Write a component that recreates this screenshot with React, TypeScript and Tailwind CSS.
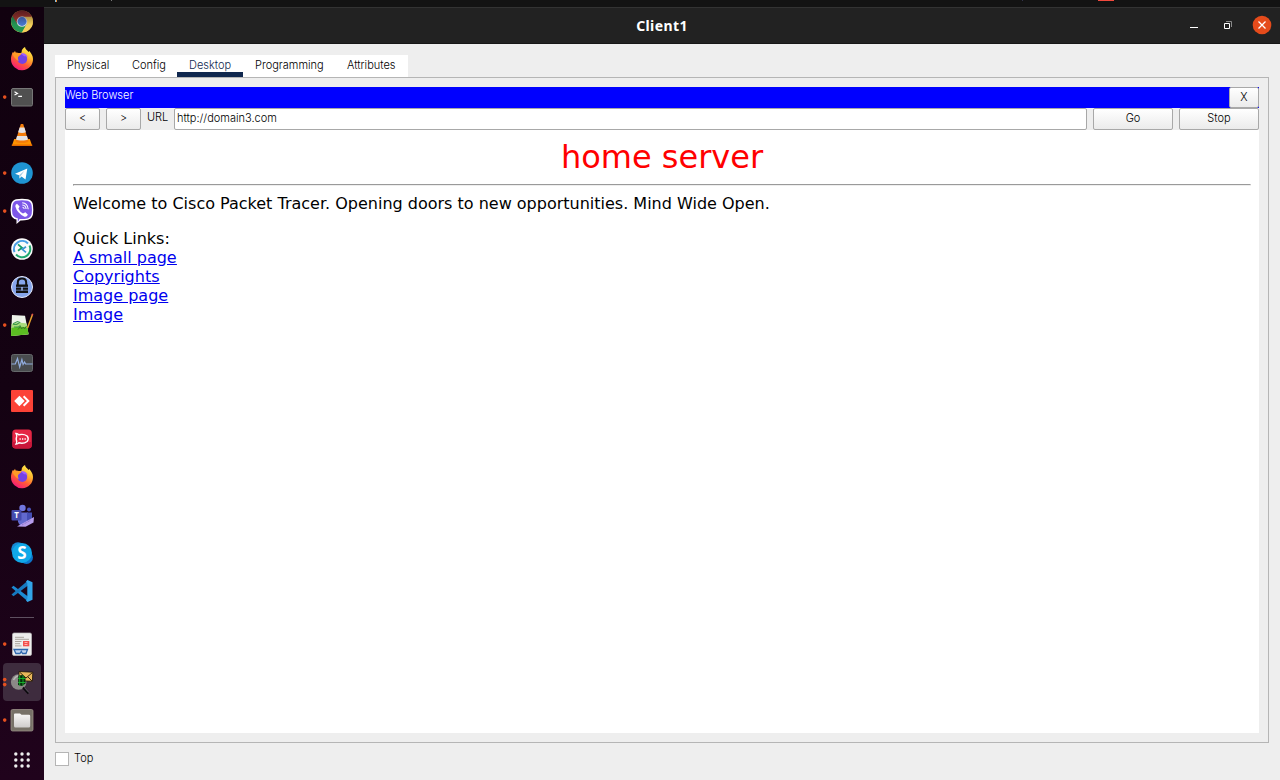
import type { ReactNode } from 'react';

function Firefox() {
  return (
    <g>
      <defs>
        <linearGradient id="fx" x1="0.85" y1="0.05" x2="0.3" y2="1">
          <stop offset="0" stopColor="#fff44f" />
          <stop offset="0.35" stopColor="#ffb52e" />
          <stop offset="0.65" stopColor="#ff5b36" />
          <stop offset="1" stopColor="#f5167e" />
        </linearGradient>
      </defs>
      <path d="M12.800 12l1 .8 1.200-2 .8 2.100c2-.7 3.600.3 5.200-.1.200-2.500 1.800-4.600 4-5.800.100 2.400 2.500 3 3.500 5l.800-1c2.300 2.700 3.700 5 3.700 8a11 11 0 01-22 .6c-.2-3 1-5.600 1.800-7.600z" fill="url(#fx)" />
      <path d="M19 12.800q1-3.200 2.200-4.300l.5 4z" fill="#14010f" />
      <circle cx="22.300" cy="19" r="4.900" fill="#7542e5" />
      <path d="M21 13.500c3-1 6.500 1.500 6.600 4-.8-1.300-2.200-1.500-3.400-1.300-1.200-.7-2.400-1.500-3.200-2.700z" fill="#a05bff" />
      <path d="M12.500 13.500c2-1.500 4.500-.8 6 0l2.800.3c-.3 1.600-2.800 1.900-3.300 3.400-.2 1.300.1 2.600.8 3.700-3.100-1.100-5.600-4.600-6.300-7.400z" fill="#ff9a26" />
    </g>
  );
}

const icons: { dot?: boolean; name: string; art: ReactNode }[] = [
  {
    name: 'Chrome',
    art: (
      <g>
        <defs>
          <linearGradient id="fade" x1="0" y1="0" x2="0" y2="1">
            <stop offset="0" stopColor="#12010f" stopOpacity=".65" />
            <stop offset="1" stopColor="#12010f" stopOpacity="0" />
          </linearGradient>
        </defs>
        <circle cx="22" cy="19.500" r="11" fill="#f6cf55" />
        <path d="M12.500 14A11 11 0 0022 30.500l5-8.700-5-2.300z" fill="#249654" />
        <path d="M22 14.500h9.600a11 11 0 01-9.600 16l5-9z" fill="#f3cf5b" />
        <path d="M12.500 14A11 11 0 0131.500 14l.2.700H22l-5 6.700z" fill="#a83a2f" />
        <circle cx="22" cy="19.500" r="5.300" fill="#d2d8df" />
        <circle cx="22" cy="19.500" r="4.400" fill="#4778cf" />
        <rect x="10" y="5" width="24" height="18" fill="url(#fade)" />
      </g>
    ),
  },
  { name: 'Firefox', art: <Firefox /> },
  {
    name: 'Terminal',
    dot: true,
    art: (
      <g>
        <rect x="11.500" y="10.500" width="21" height="17.500" rx="1.500" fill="#505050" stroke="#777" />
        <path d="M14.500 13.700l3 1.700-3 1.700M18.200 18.400h3.800" fill="none" stroke="#fff" strokeWidth="1.200" />
      </g>
    ),
  },
  {
    name: 'VLC',
    art: (
      <g>
        <path d="M14.200 23h15.600l2.400 7H11.800z" fill="#ff9300" />
        <path d="M11.800 28.500h20.400V30H11.800z" fill="#e56b00" />
        <path d="M20.800 8h2.400l5.300 17.500c-2 2-11 2-13 0z" fill="#f47d0a" />
        <path d="M19.600 11.500h4.800l1.500 4.800c-2 1-5.800 1-7.800 0zM17 20h10l1 3.400c-2.500 1.500-9.500 1.500-12 0z" fill="#e4e4e4" />
      </g>
    ),
  },
  {
    name: 'Telegram',
    dot: true,
    art: (
      <g>
        <circle cx="22" cy="19" r="10.800" fill="#1f94d2" />
        <path d="M15 19.700l12.300-5.300-1.800 11-4-2.800-2 1.900-.5-3.300z" fill="#fff" />
        <path d="M19 21.200l5.500-4.500-4 5.500-1 2.200z" fill="#a9cce3" />
      </g>
    ),
  },
  {
    name: 'Viber',
    dot: true,
    art: (
      <g>
        <path d="M16 7.300q6-1.300 12 0 4.500 1.200 5 6 .6 5 0 9-1 4.500-5 5.500-4 .9-7.500.7l-4 3.500v-4.500q-4.500-.8-5.500-5-.8-5 0-9.500.8-4.700 5-5.700z" fill="#fff" />
        <path d="M16.500 8.800q5.500-1.100 11 0 3.700 1 4.200 5 .5 4.200 0 8-.8 3.800-4.200 4.600-4.500.9-8 .5l-1.700 3.300v-3.900q-4.500-.6-5.400-4.200-.7-4.300 0-8.500.6-4 4.100-4.800z" fill="#7d58e8" />
        <path d="M17 11.700l2.600 2.900-1.200 2.200q1.500 3.300 4.600 4.600l2.400-1.100 2.500 2.500q-1.200 2.500-3.400 1.900-7.300-3.200-9.200-10.400 0-1.900 1.700-2.600z" fill="#fff" />
        <path d="M22.200 10.700q5.500.3 6 6.600M22.300 13q3.500.3 3.800 4M22.500 15.200q1.500.1 1.700 1.800" fill="none" stroke="#fff" strokeWidth="1.100" />
      </g>
    ),
  },
  {
    name: 'Remote viewer',
    art: (
      <g>
        <circle cx="22" cy="19" r="10.800" fill="#fafafa" />
        <path d="M14.500 22.200A8.200 8.200 0 0128 13.500" fill="none" stroke="#4a9fe6" strokeWidth="2" />
        <path d="M29.500 15.500A8.200 8.200 0 0116 24.500" fill="none" stroke="#22a971" strokeWidth="2" />
        <path d="M18 14.300l4 3.500-4 3" fill="none" stroke="#159c68" strokeWidth="1.700" />
        <path d="M26 16.700l-3.700 2.700 3.700 3" fill="none" stroke="#3995d2" strokeWidth="1.700" />
      </g>
    ),
  },
  {
    name: 'Password vault',
    art: (
      <g>
        <circle cx="22" cy="19" r="10.500" fill="#86a5ec" stroke="#e4eafa" strokeWidth="1" />
        <path d="M17.800 18v-3.500q0-4 4.200-4t4.200 4V18" fill="none" stroke="#111" strokeWidth="2" />
        <path d="M16 16.500h12v8.500H16z" fill="#111" />
        <path d="M16 19.300h12M16 22.200h12" stroke="#7997db" strokeWidth=".7" />
        <path d="M22 19v3.500" stroke="#9eb5ef" strokeWidth="1.500" />
      </g>
    ),
  },
  {
    name: 'Notepad++',
    dot: true,
    art: (
      <g>
        <path d="M12 9l13 .7 3.500 18.500L11 30z" fill="#edf2e9" />
        <path d="M11.600 18q7-2 15.100-.5l1.800 10.700L11 30z" fill="#a9dc7c" />
        <path d="M11.400 22q8-2 16.100-.5l1 6.700L11 30z" fill="#5bbd22" />
        <path d="M13.500 17.500l4-2 2.200.8-3 2.200h-3zM14 21h4.500l2-1.500" fill="none" stroke="#3f9a4c" strokeWidth="1.100" />
        <path d="M18 23.500l2.500-3 1 2.500 2-2 1 2 2-3" fill="none" stroke="#367229" strokeWidth=".9" />
        <path d="M27.500 22l5-13.500" stroke="#e5a12c" strokeWidth="1.500" />
        <path d="M32 9.500l.7-1.700" stroke="#de514d" strokeWidth="1.500" />
      </g>
    ),
  },
  {
    name: 'System monitor',
    art: (
      <g>
        <rect x="11.500" y="10.500" width="21" height="17" rx="2" fill="#494c4e" stroke="#65686a" />
        <path d="M11.500 20h3.800l2.200-5.500 2.200 8.500 2.200-7.500 1.200 5 1.500-2.500 1 2h7" fill="none" stroke="#91acde" strokeWidth="1.200" />
      </g>
    ),
  },
  {
    name: 'AnyDesk',
    art: (
      <g>
        <rect x="11" y="8" width="22" height="22" rx="1" fill="#fc4236" />
        <path d="M14.200 19l5.200-5.300 5.300 5.300-5.300 5.300z" fill="#fff" />
        <path d="M23.600 14.300l4.700 4.700-4.700 4.700" fill="none" stroke="#fff" strokeWidth="2" />
      </g>
    ),
  },
  {
    name: 'Rocket.Chat',
    art: (
      <g>
        <rect x="12.300" y="9.500" width="19.500" height="19" rx="3.500" fill="#e52644" />
        <path d="M12.300 22h19.500v3a3.500 3.500 0 01-3.500 3.500H15.800a3.500 3.500 0 01-3.500-3.500z" fill="#c9163a" />
        <path d="M16 13.500q2 .2 2.800 1.300 5-1.200 8.300 1.200 2.200 2.800 0 5.500-3.300 2.500-8.300 1.300-.8 1.100-2.800 1.200 1-1.700.7-2.700-1-2.500 0-5.100.2-1.100-.7-2.700z" fill="none" stroke="#fff" strokeWidth="1.400" />
        <path d="M19.500 19h1.300M22 19h1.300M24.500 19h1.300" stroke="#fff" strokeWidth="1.400" />
      </g>
    ),
  },
  { name: 'Firefox', art: <Firefox /> },
  {
    name: 'Teams',
    art: (
      <g>
        <circle cx="22.500" cy="12" r="3.200" fill="#7177df" />
        <circle cx="29" cy="13.500" r="2" fill="#4b55bd" />
        <path d="M18 16.500h10v9q-2 4-6 4-3 0-4-4z" fill="#6269ce" />
        <path d="M27 16.500h5v7q-1 4-5 3z" fill="#454eb4" />
        <rect x="11.500" y="14" width="10" height="10.500" rx="1" fill="#454bad" />
        <text x="16.500" y="22.200" textAnchor="middle" fontFamily="Open Sans" fontWeight="bold" fontSize="8" fill="#fff">T</text>
        <path d="M17 30.500L34 21l-.5 5.500-8 4.300z" fill="#b69cec" />
        <path d="M22 29l9-5" stroke="#8971c9" strokeWidth="1" strokeDasharray="1 .7" />
      </g>
    ),
  },
  {
    name: 'Skype',
    art: (
      <g>
        <circle cx="18" cy="15" r="6.800" fill="#1788d2" />
        <circle cx="26.500" cy="23.500" r="6.500" fill="#0c75ca" />
        <circle cx="22" cy="19" r="10" fill="#10a8e8" />
        <text x="22" y="25" textAnchor="middle" fontFamily="Open Sans" fontWeight="bold" fontSize="17" fill="#fff">S</text>
      </g>
    ),
  },
  {
    name: 'VS Code',
    art: (
      <g>
        <path d="M11.500 15.500l2-1.700L28 24.500v5z" fill="#1b8ad2" />
        <path d="M11.500 22.500l2 1.700L28 13.500v-5z" fill="#1679c0" />
        <path d="M27.500 8l5 2.300v17.400l-5 2.300-1.500-1.500 1.300-1.500V11L26 9.500z" fill="#32a5e9" />
      </g>
    ),
  },
];

const openApps: { name: string; dots: number; active?: boolean; art: ReactNode }[] = [
  {
    name: 'Document viewer',
    dots: 1,
    art: (
      <g>
        <rect x="12.500" y="8" width="19" height="22.500" rx="1.500" fill="#ededed" stroke="#bdbdbd" strokeWidth=".7" />
        <path d="M15 12.300h9M15 14.300h14M15 16.500h6.500M15 18.700h5M15 20.900h6.500" stroke="#aaa59e" />
        <rect x="23" y="16" width="6.300" height="5.300" fill="#f34f4c" />
        <path d="M24.500 17.500h3M24.500 19.500h3" stroke="#ffb2ad" />
        <path d="M14 24.500h13.500l-1.500 4h-3.500l-1.200-2-1.400 2h-4z" fill="#bfd4ef" stroke="#2d67ae" strokeWidth="1.300" />
      </g>
    ),
  },
  {
    name: 'Packet Tracer',
    dots: 2,
    active: true,
    art: (
      <g>
        <circle cx="18.700" cy="19" r="7.800" fill="#8b8987" />
        <path d="M13.500 17q2-4 6-4.500" fill="none" stroke="#bab9b7" strokeWidth="1.500" />
        <path d="M19 8.500l13.800.7-.4 9-13.400-.5z" fill="#e9b85b" stroke="#181109" strokeWidth=".8" />
        <path d="M19.500 9l6.500 6 6.500-5.500M32 18l-4-4" stroke="#3a250b" fill="none" />
        <path d="M18.500 12.500l4-.5 3 3v5.500l-3.500 2.500-4-1z" fill="#062c0b" />
        <path d="M18 15.500h7.500M18 19.500h7.500M19.700 12.500v10M23 12.500v10" stroke="#19b52d" strokeWidth=".9" />
        <path d="M23 24.500l5.500 6" stroke="#0b090d" strokeWidth="2" />
        <path d="M24.500 24.700l4.500 5" stroke="#85808b" strokeWidth=".6" />
      </g>
    ),
  },
  {
    name: 'Files',
    dots: 1,
    art: (
      <g>
        <defs>
          <linearGradient id="folder" x1="0" y1="0" x2="0" y2="1">
            <stop offset="0" stopColor="#f8f7f7" />
            <stop offset="1" stopColor="#cfcccc" />
          </linearGradient>
        </defs>
        <rect x="11" y="8.500" width="22" height="21.500" rx="1.500" fill="#777168" stroke="#9a9186" strokeWidth=".8" />
        <path d="M14 13.500q0-1 1-1h5l1.500 1.200H29q1.200 0 1.200 1.200V25q0 1.500-1.500 1.500H15.500Q14 26.500 14 25z" fill="url(#folder)" />
      </g>
    ),
  },
];

function DockItem({ name, dots, active, art }: { name: string; dots: number; active?: boolean; art: ReactNode }) {
  return (
    <li aria-label={name} className="h-[38px] shrink-0">
      <svg className="block" width="44" height="38" viewBox="0 0 44 38">
        {active && <rect x="3" y="0" width="38" height="38" rx="4" fill="#3e2c3e" />}
        {dots === 1 && <circle cx="4.700" cy="19.100" r="1.800" fill="#e6501f" />}
        {dots === 2 && (
          <g fill="#e6501f">
            <circle cx="4.700" cy="16.600" r="1.800" />
            <circle cx="4.700" cy="21.600" r="1.800" />
          </g>
        )}
        {art}
      </svg>
    </li>
  );
}

const tabs = [
  { label: 'Physical', size: 'w-[65px] pl-3' },
  { label: 'Config', size: 'w-[57px] pl-3' },
  { label: 'Desktop', size: 'w-[66px] pl-3', active: true },
  { label: 'Programming', size: 'w-[92px] pl-3' },
  { label: 'Attributes', size: 'w-[73px] pl-3' },
];

const button = 'flex items-center justify-center rounded-[2px] border border-[#a8a8a8] bg-linear-to-b from-white to-[#ebebeb]';

export default function App() {
  return (
    <div className="flex h-[780px] w-[1280px] flex-col overflow-hidden bg-[#eeeeee] font-['Inter',sans-serif] text-[11px] font-light text-black">
      <div className="h-[7px] shrink-0 bg-[#131313]">
        <svg className="block" width="1280" height="7">
          <path d="M55 0h1v2h-1z" fill="#81bfe8" />
          <path d="M56 0h1v2h-1z" fill="#e88b32" />
          <path d="M111 0h1v1h-1z" fill="#777" />
          <path d="M1022 0h1v1h-1z" fill="#33334b" />
          <path d="M1098 0h16v1h-16z" fill="#f1493d" />
        </svg>
      </div>
      <div className="flex min-h-0 flex-1">
        <ul className="flex w-11 shrink-0 flex-col overflow-hidden bg-linear-to-b from-[#11010f] via-[#140212] to-[#20031c]">
          <li className="-mt-[5px] shrink-0">
            <ul>
              {icons.map((icon, i) => (
                <DockItem key={i} name={icon.name} art={icon.art} dots={icon.dot ? 1 : 0} />
              ))}
            </ul>
          </li>
          <li className="mx-[10px] mt-[7px] mb-[7px] h-px shrink-0 bg-[#5e5060]" />
          {openApps.map((app) => (
            <DockItem key={app.name} {...app} />
          ))}
          <li className="pt-[13px]">
            <svg className="block" width="44" height="16" viewBox="0 0 44 16" fill="#eee">
              {[2, 8, 14].map((y) => [15.800, 22, 28.200].map((x) => <circle key={`${x}-${y}`} cx={x} cy={y} r="1.700" />))}
            </svg>
          </li>
        </ul>

        <main className="flex min-w-0 flex-1 flex-col">
          <header className="flex h-[37px] shrink-0 items-center border-t border-b border-t-[#333] border-b-[#171717] bg-[#222]">
            <h1 className="flex-1 pl-24 text-center font-['Noto_Sans',sans-serif] text-[14px] font-bold tracking-[0.4px] text-white">Client1</h1>
            <svg width="96" height="35" viewBox="0 0 96 35">
              <path d="M6 19.500h8" stroke="#fff" />
              <path d="M40.500 15.500h5v5h-5z" fill="none" stroke="#fff" />
              <path d="M42 13.500h5.500V19" fill="none" stroke="#8a8a8a" />
              <circle cx="78" cy="17" r="9.300" fill="#e54b1b" />
              <path d="M74.500 13.500l7 7M81.500 13.500l-7 7" stroke="#fff" strokeWidth="1.300" />
            </svg>
          </header>

          <div className="flex min-h-0 flex-1 flex-col pt-[11px] pr-[11px] pl-[11px]">
            <nav className="flex h-[22px] w-[353px] shrink-0 bg-white">
              {tabs.map((tab) => (
                <button
                  key={tab.label}
                  className={`${tab.size} ${tab.active ? 'border-b-5 border-[#10284f] text-[#10284f]' : 'border-b-5 border-transparent'} flex items-center pt-[4px] text-left whitespace-nowrap`}
                >
                  {tab.label}
                </button>
              ))}
            </nav>

            <section className="flex h-[666px] shrink-0 flex-col border border-[#b5b5b5] px-[9px] pt-[9px] pb-[9px]">
              <div className="flex h-[21px] shrink-0 justify-between bg-[#0000ff]">
                <span className="leading-[17px] text-white">Web Browser</span>
                <button className={`${button} w-[30px]`}>X</button>
              </div>
              <div className="flex h-[22px] shrink-0">
                <button className={`${button} w-[35px] pb-px`}>&lt;</button>
                <button className={`${button} ml-[6px] w-[35px] pb-px`}>&gt;</button>
                <label className="ml-[6px] w-[27px] leading-[19px]">URL</label>
                <div className="flex w-[913px] items-center rounded-[2px] border border-[#a8a8a8] bg-white pb-px pl-[2px]">http://domain3.com</div>
                <button className={`${button} ml-[6px] w-[80px] pb-px`}>Go</button>
                <button className={`${button} ml-[6px] w-[80px] pb-px`}>Stop</button>
              </div>
              <article className="min-h-0 flex-1 bg-white px-2 pt-2 font-['DejaVu_Sans',sans-serif] text-[16px] leading-[19px] font-normal text-black">
                <h2 className="h-[46px] text-center text-[32px] leading-[38px] text-[#ff0000]">home server</h2>
                <hr className="h-[2px] border border-t-[#9a9a9a] border-r-[#eee] border-b-[#eee] border-l-[#9a9a9a]" />
                <p className="mt-2">Welcome to Cisco Packet Tracer. Opening doors to new opportunities. Mind Wide Open.</p>
                <p className="mt-4">Quick Links:</p>
                <div className="flex flex-col items-start text-[#0000ee] underline">
                  <a href="#small">A small page</a>
                  <a href="#copyrights">Copyrights</a>
                  <a href="#imagepage">Image page</a>
                  <a href="#image">Image</a>
                </div>
              </article>
            </section>

            <label className="mt-[9px] flex items-start gap-[5px]">
              <span className="size-[14px] border border-[#b5b5b5] bg-white" />
              <span className="leading-[13px]">Top</span>
            </label>
          </div>
        </main>
      </div>
    </div>
  );
}
